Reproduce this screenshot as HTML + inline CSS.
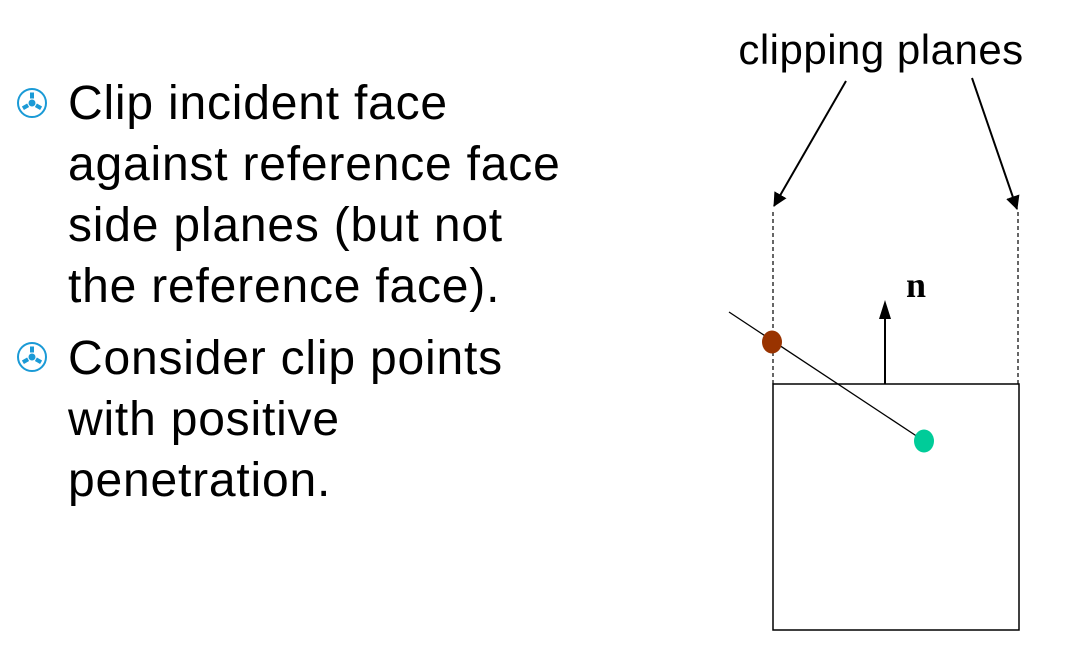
<!DOCTYPE html>
<html><head><meta charset="utf-8"><style>
html,body{margin:0;padding:0;background:#fff;width:1087px;height:663px;overflow:hidden;position:relative}
.t{position:absolute;left:68px;font-family:"Liberation Sans",sans-serif;font-size:48px;letter-spacing:0.8px;color:#000;white-space:nowrap;line-height:61px}
</style></head><body>
<svg width="1087" height="663" style="position:absolute;left:0;top:0">
<defs><marker id="ah" markerWidth="14" markerHeight="14" refX="13" refY="7" orient="auto" markerUnits="userSpaceOnUse"><path d="M0,0 L14,7 L0,14 z" fill="#000"/></marker></defs>
<g transform="translate(32,103)">
<circle r="14" fill="none" stroke="#1a9ad6" stroke-width="2"/>
<circle r="3.5" fill="#1a9ad6"/>
<rect x="-2" y="-10.5" width="4" height="6" fill="#1a9ad6"/>
<rect x="-2" y="-10.5" width="4" height="6" fill="#1a9ad6" transform="rotate(120)"/>
<rect x="-2" y="-10.5" width="4" height="6" fill="#1a9ad6" transform="rotate(240)"/>
</g>
<g transform="translate(32,357)">
<circle r="14" fill="none" stroke="#1a9ad6" stroke-width="2"/>
<circle r="3.5" fill="#1a9ad6"/>
<rect x="-2" y="-10.5" width="4" height="6" fill="#1a9ad6"/>
<rect x="-2" y="-10.5" width="4" height="6" fill="#1a9ad6" transform="rotate(120)"/>
<rect x="-2" y="-10.5" width="4" height="6" fill="#1a9ad6" transform="rotate(240)"/>
</g>
<text x="881" y="64" text-anchor="middle" font-family="Liberation Sans, sans-serif" font-size="42" letter-spacing="0.5">clipping planes</text>
<line x1="846" y1="81" x2="774" y2="206" stroke="#000" stroke-width="2" marker-end="url(#ah)"/>
<line x1="972" y1="78" x2="1017" y2="209" stroke="#000" stroke-width="2" marker-end="url(#ah)"/>
<line x1="773" y1="212" x2="773" y2="384" stroke="#000" stroke-width="1.2" stroke-dasharray="4,3"/>
<line x1="1018" y1="212" x2="1018" y2="384" stroke="#000" stroke-width="1.2" stroke-dasharray="4,3"/>
<rect x="773" y="384" width="246" height="246" fill="none" stroke="#000" stroke-width="1.5"/>
<line x1="885" y1="384" x2="885" y2="304" stroke="#000" stroke-width="2"/>
<path d="M879,319 L885,300 L891,319 z" fill="#000"/>
<text x="906" y="297" font-family="Liberation Serif, serif" font-weight="bold" font-size="36">n</text>
<line x1="729" y1="312" x2="918" y2="437" stroke="#000" stroke-width="1.3"/>
<ellipse cx="772" cy="342" rx="10" ry="11.5" fill="#993300"/>
<ellipse cx="924" cy="441" rx="10" ry="11.5" fill="#00cc99"/>
</svg>
<div class="t" style="top:73px">Clip incident face<br>against reference face<br>side planes (but not<br>the reference face).</div>
<div class="t" style="top:328px">Consider clip points<br>with positive<br>penetration.</div>
</body></html>
